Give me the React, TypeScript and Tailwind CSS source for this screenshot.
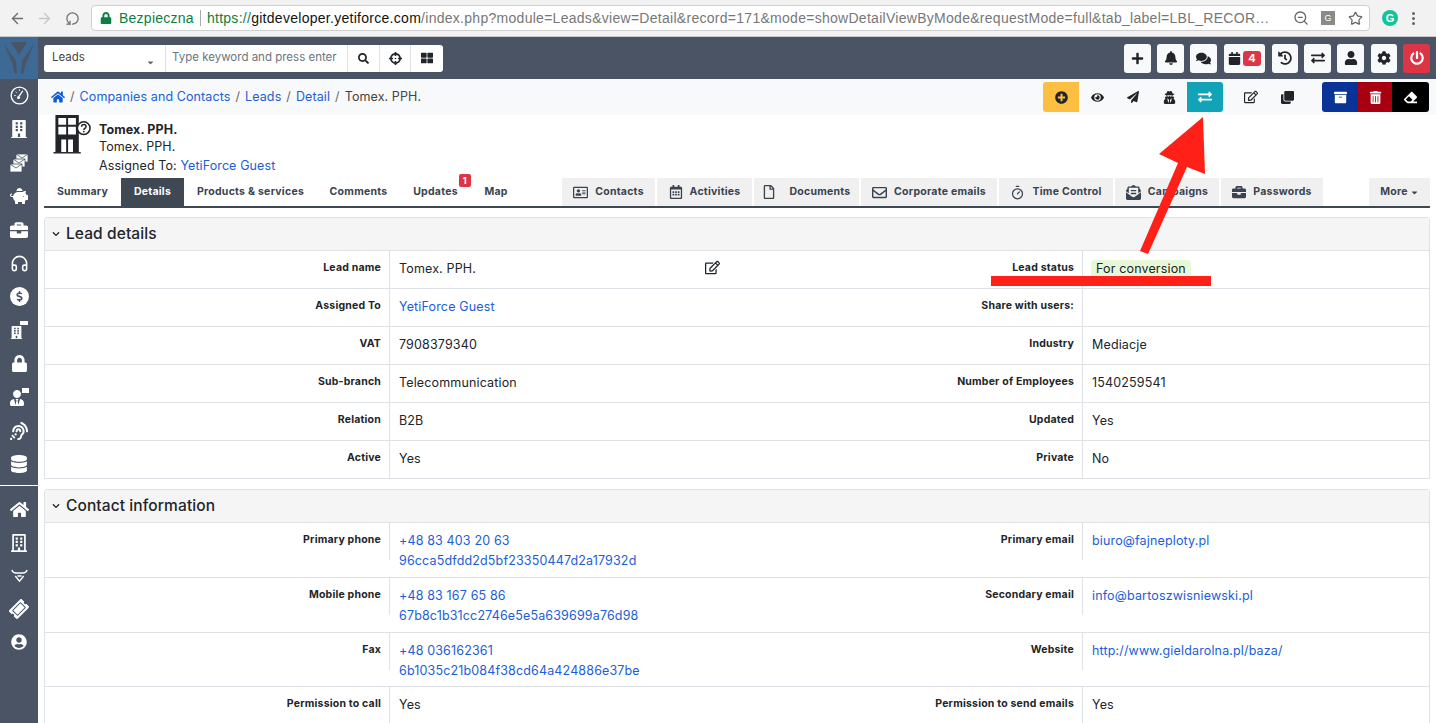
import type { ReactNode } from 'react';
import { ArrowLeft, ArrowRight, RotateCw, ZoomOut, Star, Timer, Headphones } from 'lucide-react';
import {
  FaLock, FaSearch, FaCrosshairs, FaThLarge, FaPlus, FaBell, FaComments, FaCalendar, FaHistory,
  FaExchangeAlt, FaUser, FaCog, FaPowerOff, FaHome, FaPlusCircle, FaEye, FaPaperPlane, FaUserSecret,
  FaRegEdit, FaClone, FaArchive, FaTrashAlt, FaEraser, FaPiggyBank, FaBriefcase, FaDollarSign,
  FaBuilding, FaRegBuilding, FaUserTie, FaAssistiveListeningSystems, FaDatabase, FaTicketAlt, FaUserCircle,
  FaRegAddressCard, FaRegCalendarAlt, FaRegFile, FaRegEnvelope, FaEnvelopeOpenText, FaChevronDown, FaCaretDown,
} from 'react-icons/fa';

const link = 'text-[#1b5ed8]';

function Gauge() {
  return (
    <svg viewBox="0 0 20 20" className="h-[19px] w-[19px]" fill="none" stroke="#fff">
      <circle cx="10" cy="10" r="8.8" strokeWidth="1.4" />
      <path d="M9.5 11 13.5 5" strokeWidth="1.4" />
      <circle cx="9" cy="12" r="1.6" fill="#fff" stroke="none" />
      <path d="M4.5 10h1.5M6 6l1 1M10 3.5V5" strokeWidth="1" />
    </svg>
  );
}

function DollarCircle() {
  return (
    <span className="flex h-[19px] w-[19px] items-center justify-center rounded-full bg-white">
      <FaDollarSign className="text-[11px] text-[#4a5464]" />
    </span>
  );
}

function Horns() {
  return (
    <svg viewBox="0 0 20 16" className="h-[14px] w-[17px]" fill="none" stroke="#fff" strokeWidth="1.6">
      <path d="M1 1c1 3 3 3.5 5 3.5h8c2 0 4-.5 5-3.5" />
      <path d="M5 8l5 6 5-6M7.5 8h5" />
    </svg>
  );
}

function MailStack() {
  return (
    <svg viewBox="0 0 20 20" className="h-[20px] w-[20px]" fill="#fff" stroke="#4a5464" strokeWidth="0.8">
      <rect x="7" y="1" width="12" height="8" />
      <path d="m7 1 6 4 6-4" fill="none" />
      <rect x="4" y="6" width="12" height="8" />
      <path d="m4 6 6 4 6-4" fill="none" />
      <rect x="1" y="11" width="12" height="8" />
      <path d="m1 11 6 4 6-4" fill="none" />
    </svg>
  );
}

const sideTop: ReactNode[] = [
  <Gauge />,
  <FaBuilding className="text-[18px]" />,
  <MailStack />,
  <FaPiggyBank className="text-[18px]" />,
  <FaBriefcase className="text-[18px]" />,
  <Headphones size={19} strokeWidth={2} />,
  <DollarCircle />,
  <span className="relative block h-[18px] w-[18px]">
    <FaBuilding className="absolute bottom-0 left-0 text-[13px]" />
    <span className="absolute right-0 top-0 h-[4px] w-[8px] bg-white" />
  </span>,
  <FaLock className="text-[17px]" />,
  <span className="relative block h-[18px] w-[20px]">
    <FaUserTie className="absolute bottom-0 left-0 text-[16px]" />
    <span className="absolute right-0 top-0 h-[5px] w-[7px] bg-white" />
  </span>,
  <FaAssistiveListeningSystems className="text-[18px]" />,
  <FaDatabase className="text-[18px]" />,
];

const sideBottom: ReactNode[] = [
  <FaHome className="text-[19px]" />,
  <FaRegBuilding className="text-[18px]" />,
  <Horns />,
  <FaTicketAlt className="-rotate-45 text-[18px]" />,
  <FaUserCircle className="text-[16px]" />,
];

function TopBtn({ children, w = 'w-[27px]', color = 'bg-[#f8f9fa] text-[#212529]' }: { children: ReactNode; w?: string; color?: string }) {
  return <div className={`flex h-[29px] ${w} items-center justify-center rounded-[3px] ${color}`}>{children}</div>;
}

function ActBtn({ children, cls = 'text-[#212529]', w = 'w-[36px]' }: { children: ReactNode; cls?: string; w?: string }) {
  return <div className={`flex h-[30px] ${w} items-center justify-center ${cls}`}>{children}</div>;
}

const leftTabs = [
  { label: 'Summary', w: 'w-[77px]' },
  { label: 'Details', w: 'w-[63px]', active: true },
  { label: 'Products & services', w: 'w-[133px]' },
  { label: 'Comments', w: 'w-[83px]' },
  { label: 'Updates', w: 'w-[71px]', badge: '1' },
  { label: 'Map', w: 'w-[50px]' },
];

const rightTabs = [
  { label: 'Contacts', w: 'w-[93px]', icon: <FaRegAddressCard className="text-[15px]" /> },
  { label: 'Activities', w: 'w-[95px]', icon: <FaRegCalendarAlt className="text-[14px]" /> },
  { label: 'Documents', w: 'w-[105px]', icon: <FaRegFile className="mr-[6px] text-[14px]" /> },
  { label: 'Corporate emails', w: 'w-[136px]', icon: <FaRegEnvelope className="text-[15px]" /> },
  { label: 'Time Control', w: 'w-[114px]', icon: <Timer size={15} /> },
  { label: 'Campaigns', w: 'w-[104px]', icon: <FaEnvelopeOpenText className="text-[15px]" /> },
  { label: 'Passwords', w: 'w-[102px]', icon: <FaBriefcase className="text-[14px]" /> },
];

type Val = string | { text: string; link?: boolean; badge?: boolean; edit?: boolean; sub?: string };
type Row = [string, Val, string, Val];

const leadRows: Row[] = [
  ['Lead name', { text: 'Tomex. PPH.', edit: true }, 'Lead status', { text: 'For conversion', badge: true }],
  ['Assigned To', { text: 'YetiForce Guest', link: true }, 'Share with users:', ''],
  ['VAT', '7908379340', 'Industry', 'Mediacje'],
  ['Sub-branch', 'Telecommunication', 'Number of Employees', '1540259541'],
  ['Relation', 'B2B', 'Updated', 'Yes'],
  ['Active', 'Yes', 'Private', 'No'],
];

const contactRows: Row[] = [
  ['Primary phone', { text: '+48 83 403 20 63', link: true, sub: '96cca5dfdd2d5bf23350447d2a17932d' }, 'Primary email', { text: 'biuro@fajneploty.pl', link: true }],
  ['Mobile phone', { text: '+48 83 167 65 86', link: true, sub: '67b8c1b31cc2746e5e5a639699a76d98' }, 'Secondary email', { text: 'info@bartoszwisniewski.pl', link: true }],
  ['Fax', { text: '+48 036162361', link: true, sub: '6b1035c21b084f38cd64a424886e37be' }, 'Website', { text: 'http://www.gieldarolna.pl/baza/', link: true }],
  ['Permission to call', 'Yes', 'Permission to send emails', 'Yes'],
];

function Label({ text, w }: { text: string; w: string }) {
  return (
    <div className={`${w} h-[37px] shrink-0 self-start border-r border-[#dee2e6] pr-[8px] pt-[9px] text-right text-[10.5px] font-bold leading-[15px] tracking-[0.2px] text-[#212529]`}>
      {text}
    </div>
  );
}

function Value({ v, w }: { v: Val; w: string }) {
  const val = typeof v === 'string' ? { text: v } : v;
  return (
    <div className={`${w} relative shrink-0 pl-[9px] pt-[8px] text-[12.5px] leading-[20px] tracking-[0.15px] text-[#212529]`}>
      {val.badge ? (
        <span className="-ml-[1px] rounded-[4px] bg-[#e6f8d8] px-[5px] py-[1px]">{val.text}</span>
      ) : (
        <div className={val.link ? link : ''}>{val.text}</div>
      )}
      {val.sub && <div className={link}>{val.sub}</div>}
      {val.edit && <FaRegEdit className="absolute right-[17px] top-[9px] text-[15px]" />}
    </div>
  );
}

function Panel({ title, rows, heights }: { title: string; rows: Row[]; heights: string[] }) {
  return (
    <div className="rounded-t-[3px] border border-[#dee2e6]">
      <div className="flex h-[32px] items-center bg-[#f5f5f5] pl-[7px] text-[#212529]">
        <FaChevronDown className="mr-[6px] text-[8px]" />
        <span className="text-[15.5px] font-medium leading-none tracking-[0.1px]">{title}</span>
      </div>
      {rows.map((r, i) => (
        <div key={r[0]} className={`flex ${heights[i]} border-t border-[#dee2e6]`}>
          <Label text={r[0]} w="w-[345px]" />
          <Value v={r[1]} w="w-[347px]" />
          <Label text={r[2]} w="w-[346px]" />
          <Value v={r[3]} w="flex-1" />
        </div>
      ))}
    </div>
  );
}

export default function App() {
  return (
    <div className="relative h-[723px] w-[1436px] overflow-hidden bg-white font-['Inter',sans-serif]">
      {/* browser bar */}
      <div className="flex h-[37px] items-center border-b border-[#c9c9c9] bg-[#f2f2f2] pl-[8px] pr-[10px] font-['Liberation_Sans',sans-serif]">
        <ArrowLeft size={17} className="ml-[1px] text-[#6f6f6f]" />
        <ArrowRight size={17} className="ml-[10px] text-[#c8c8c8]" />
        <RotateCw size={15} className="ml-[12px] scale-x-[-1] -rotate-90 text-[#6f6f6f]" />
        <div className="ml-[11px] flex h-[26px] w-[1279px] items-center rounded-[4px] border border-[#cfcfcf] bg-white pl-[8px] pr-[6px]">
          <FaLock className="text-[12px] text-[#0b8043]" />
          <span className="ml-[7px] text-[14px] tracking-[0.25px] text-[#0b8043]">Bezpieczna</span>
          <span className="mx-[6px] h-[16px] w-px bg-[#aaa]" />
          <span className="min-w-0 flex-1 truncate text-[14px] tracking-[0.28px] text-[#777]">
            <span className="text-[#0b8043]">https://</span>
            <span className="text-[#111]">gitdeveloper.yetiforce.com</span>
            /index.php?module=Leads&view=Detail&record=171&mode=showDetailViewByMode&requestMode=full&tab_label=LBL_RECORD_D...
          </span>
          <ZoomOut size={16} className="ml-[14px] text-[#666]" />
          <span className="ml-[12px] flex h-[14px] w-[14px] items-center justify-center bg-[#8a8a8a] text-[9px] leading-none text-white">G</span>
          <Star size={15} className="ml-[13px] text-[#666]" />
        </div>
        <span className="ml-[12px] flex h-[16px] w-[16px] items-center justify-center rounded-full bg-[#15c39a] text-[11px] font-bold leading-none text-white">G</span>
        <span className="ml-[14px] flex flex-col gap-[2px]">
          <i className="h-[3px] w-[3px] rounded-full bg-[#666]" />
          <i className="h-[3px] w-[3px] rounded-full bg-[#666]" />
          <i className="h-[3px] w-[3px] rounded-full bg-[#666]" />
        </span>
      </div>

      <div className="flex h-[686px]">
        {/* sidebar */}
        <div className="flex w-[38px] shrink-0 flex-col bg-[#4a5464] text-white">
          <div className="flex h-[42px] items-center justify-center bg-[#3c6a95]">
            <svg viewBox="0 0 30 34" className="h-[36px] w-[30px]" fill="#4a5464">
              <path d="M7 1h16l-8 13z" />
              <path d="M0 3l12 17 1 13h-2L8 22zM30 3 18 20l-1 13h2l3-11z" />
            </svg>
          </div>
          {sideTop.map((ic, i) => (
            <div key={i} className="flex h-[33.5px] shrink-0 items-center justify-center">{ic}</div>
          ))}
          <div className="mt-[4px] h-[1px] shrink-0 bg-white" />
          <div className="h-[7px] shrink-0" />
          {sideBottom.map((ic, i) => (
            <div key={i} className="flex h-[33px] shrink-0 items-center justify-center">{ic}</div>
          ))}
        </div>

        <div className="min-w-0 flex-1">
          {/* top bar */}
          <div className="flex h-[42px] items-center justify-between bg-[#4a5464] pl-[6px] pr-[6px]">
            <div className="flex h-[27px] items-stretch overflow-hidden rounded-[3px] bg-white text-[#212529]">
              <div className="relative flex w-[119px] items-start pl-[8px] pt-[3px] text-[11.5px] leading-[18px] text-[#444]">
                Leads
                <FaCaretDown className="absolute bottom-[5px] right-[8px] text-[9px] text-[#666]" />
              </div>
              <div className="ml-[2px] flex w-[183px] items-center border-x border-[#dee2e6] pl-[6px] text-[11.5px] text-[#6c757d]">Type keyword and press enter</div>
              <div className="flex w-[32px] items-center justify-center border-r border-[#dee2e6]"><FaSearch className="text-[11px]" /></div>
              <div className="flex w-[31px] items-center justify-center border-r border-[#dee2e6]"><FaCrosshairs className="text-[13px]" /></div>
              <div className="flex w-[32px] items-center justify-center"><FaThLarge className="text-[12px]" /></div>
            </div>
            <div className="flex items-center gap-[6px] [&>*]:shrink-0">
              <TopBtn><FaPlus className="text-[13px]" /></TopBtn>
              <TopBtn><FaBell className="text-[14px]" /></TopBtn>
              <TopBtn><FaComments className="text-[15px]" /></TopBtn>
              <TopBtn w="w-[41px] ml-[1px]">
                <FaCalendar className="text-[13px]" />
                <span className="ml-[2px] rounded-[3px] bg-[#dc3545] px-[5px] text-[11px] font-bold leading-[15px] text-white">4</span>
              </TopBtn>
              <TopBtn w="w-[26px] ml-[1px]"><FaHistory className="text-[14px]" /></TopBtn>
              <TopBtn><FaExchangeAlt className="text-[14px]" /></TopBtn>
              <TopBtn><FaUser className="text-[14px]" /></TopBtn>
              <TopBtn w="w-[26px] ml-[1px]"><FaCog className="text-[14px]" /></TopBtn>
              <TopBtn color="bg-[#dc3545] text-white"><FaPowerOff className="text-[14px]" /></TopBtn>
            </div>
          </div>

          {/* breadcrumbs + actions */}
          <div className="flex h-[36px] items-center justify-between bg-[#f8f9fa] pl-[13px] pr-[7px]">
            <div className="flex items-center gap-[5px] text-[12.5px] tracking-[0.1px] text-[#212529]">
              <FaHome className="text-[14px] text-[#0d5bdc]" />
              <span className="text-[#666]">/</span>
              <span className={link}>Companies and Contacts</span>
              <span className="text-[#666]">/</span>
              <span className={link}>Leads</span>
              <span className="text-[#666]">/</span>
              <span className={link}>Detail</span>
              <span className="text-[#666]">/</span>
              <span className="text-[#444]">Tomex. PPH.</span>
            </div>
            <div className="flex items-center">
              <ActBtn cls="bg-[#fdbf41] text-[#212529] rounded-l-[3px]"><FaPlusCircle className="text-[13px]" /></ActBtn>
              <ActBtn><FaEye className="text-[13px]" /></ActBtn>
              <ActBtn><FaPaperPlane className="text-[12px]" /></ActBtn>
              <ActBtn><FaUserSecret className="text-[13px]" /></ActBtn>
              <ActBtn cls="bg-[#13a3b8] text-white rounded-r-[3px]"><FaExchangeAlt className="text-[14px]" /></ActBtn>
              <ActBtn w="w-[36px] ml-[10px]"><FaRegEdit className="text-[14px]" /></ActBtn>
              <ActBtn><FaClone className="text-[13px]" /></ActBtn>
              <ActBtn w="w-[36px] ml-[17px]" cls="bg-[#0a3398] text-white rounded-l-[3px]"><FaArchive className="text-[13px]" /></ActBtn>
              <ActBtn w="w-[34px]" cls="bg-[#a80011] text-white"><FaTrashAlt className="text-[13px]" /></ActBtn>
              <ActBtn w="w-[37px]" cls="bg-black text-white rounded-r-[3px]"><FaEraser className="text-[13px]" /></ActBtn>
            </div>
          </div>

          {/* record header */}
          <div className="flex h-[63px] pl-[14px]">
            <svg viewBox="0 0 40 40" className="h-[39px] w-[40px] shrink-0">
              <path d="M1 38h28v1.5H1z" fill="#212529" />
              <rect x="3" y="0" width="24" height="38" fill="#212529" />
              <path d="M6 3h8v7H6zM16 3h8v7h-8zM6 12h8v8H6zM16 12h8v8h-8zM9 25h5v13H9zM16 25h5v13h-5z" fill="#fff" />
              <circle cx="32" cy="13.5" r="6.5" fill="#fff" stroke="#212529" strokeWidth="1.6" />
              <path d="M29.8 12c0-3 4.6-3 4.6 0 0 1.8-2.3 1.6-2.3 3.4" fill="none" stroke="#212529" strokeWidth="1.5" />
              <circle cx="32.1" cy="17" r="0.9" fill="#212529" />
            </svg>
            <div className="ml-[7px] pt-[6px] text-[12.5px] leading-[17px] tracking-[0.1px] text-[#212529]">
              <div className="font-bold">Tomex. PPH.</div>
              <div>Tomex. PPH.</div>
              <div className="mt-[2px]">Assigned To: <span className={link}>YetiForce Guest</span></div>
            </div>
          </div>

          {/* tabs */}
          <div className="mx-[6px] flex h-[30px] border-b-2 border-[#3f4954] text-[10.5px] font-bold tracking-[0.25px] text-[#3a4350]">
            {leftTabs.map((t) => (
              <div key={t.label} className={`relative flex ${t.w} h-[28px] shrink-0 items-center justify-center ${t.active ? 'bg-[#3f4954] text-white' : ''}`}>
                {t.label}
                {t.badge && (
                  <span className="absolute right-[0px] top-[-4px] rounded-[2px] bg-[#dc3545] px-[4px] text-[9px] leading-[13px] text-white">{t.badge}</span>
                )}
              </div>
            ))}
            <div className="ml-[41px] flex gap-[2px]">
              {rightTabs.map((t) => (
                <div key={t.label} className={`flex ${t.w} h-[28px] items-center justify-center gap-[7px] bg-[#f0f0f0]`}>
                  {t.icon}
                  {t.label}
                </div>
              ))}
            </div>
            <div className="ml-auto flex h-[28px] w-[61px] items-center justify-center gap-[2px] bg-[#f0f0f0]">
              More <FaCaretDown className="text-[9px]" />
            </div>
          </div>

          {/* panels */}
          <div className="mx-[6px] mt-[9px] flex flex-col gap-[10px]">
            <Panel title="Lead details" rows={leadRows} heights={['h-[38px]', 'h-[38px]', 'h-[38px]', 'h-[38px]', 'h-[38px]', 'h-[38px]']} />
            <Panel title="Contact information" rows={contactRows} heights={['h-[55px]', 'h-[55px]', 'h-[54px]', 'h-[55px]']} />
          </div>
        </div>
      </div>

      {/* red annotations */}
      <svg className="pointer-events-none absolute left-0 top-0" width="1436" height="723" fill="#ff2018">
        <path d="M991 276h220v10H991z" />
        <path d="M1140 251 1178 163 1159 154 1203 117 1205 174 1187 167 1148 254z" />
      </svg>
    </div>
  );
}
